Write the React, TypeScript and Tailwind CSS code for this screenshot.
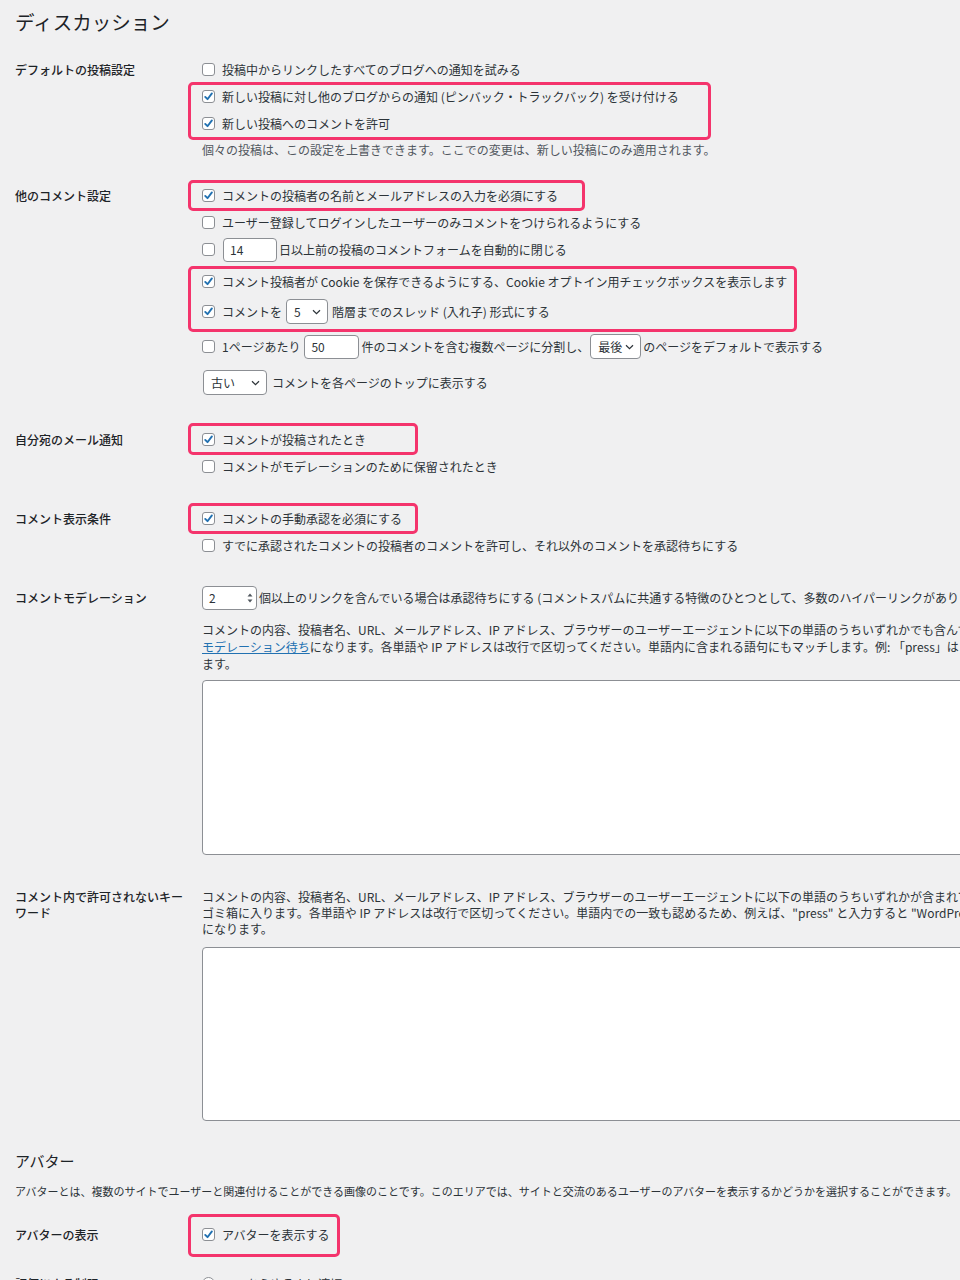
import type { ReactNode } from "react";
import clsx from "clsx";

const Check = ({ checked = false }: { checked?: boolean }) => (
  <span className="flex h-[13px] w-[13px] shrink-0 items-center justify-center rounded-[3px] border border-[#8c8f94] bg-white">
    {checked && (
      <svg width="11" height="11" viewBox="0 0 11 11">
        <path
          d="M2.2 5.9 L4.5 8.2 L8.9 2.4"
          fill="none"
          stroke="#2271b1"
          strokeWidth="1.9"
          strokeLinecap="round"
          strokeLinejoin="round"
        />
      </svg>
    )}
  </span>
);

const Chevron = () => (
  <svg width="9" height="6" viewBox="0 0 9 6" className="shrink-0">
    <path d="M1 1.2 L4.5 4.6 L8 1.2" fill="none" stroke="#2c3338" strokeWidth="1.2" />
  </svg>
);

const Select = ({ value, className }: { value: string; className?: string }) => (
  <span
    className={clsx(
      "flex h-[25px] shrink-0 items-center justify-between rounded-[4px] border border-[#8c8f94] bg-white pl-[7px] pr-[6px]",
      className
    )}
  >
    <span>{value}</span>
    <Chevron />
  </span>
);

const Field = ({ value, className }: { value: string; className?: string }) => (
  <span
    className={clsx(
      "flex h-[24px] shrink-0 items-center rounded-[4px] border border-[#8c8f94] bg-white pl-[6px]",
      className
    )}
  >
    {value}
  </span>
);

const Row = ({ children, className }: { children: ReactNode; className?: string }) => (
  <div className={clsx("flex h-[27px] items-center whitespace-nowrap", className)}>{children}</div>
);

// pink annotation frame drawn over the options it marks
const Mark = ({ frame, children }: { frame: string; children: ReactNode }) => (
  <div className="relative">
    {children}
    <span
      className={clsx(
        "pointer-events-none absolute -left-[14px] rounded-[5px] border-[3px] border-[#f4346c]",
        frame
      )}
    />
  </div>
);

const Section = ({
  label,
  className,
  children,
}: {
  label: ReactNode;
  className?: string;
  children: ReactNode;
}) => (
  <div className={clsx("flex", className)}>
    <div className="w-[187px] shrink-0 font-medium text-[#1d2327]">{label}</div>
    <div className="min-w-0 flex-1">{children}</div>
  </div>
);

const Label = ({ children }: { children: ReactNode }) => (
  <div className="flex h-[27px] items-center">{children}</div>
);

export default function App() {
  return (
    <div className="h-[1280px] w-full overflow-hidden bg-[#f0f0f1] pl-[15px] pt-[9px] font-['Noto_Sans_CJK_JP',sans-serif] text-[12px] text-[#2c3338]">
      <h1 className="text-[19.5px] leading-[26px] text-[#1d2327]">ディスカッション</h1>

      <Section label={<Label>デフォルトの投稿設定</Label>} className="mt-[21px]">
        <Row>
          <Check />
          <span className="ml-[7px]">投稿中からリンクしたすべてのブログへの通知を試みる</span>
        </Row>
        <Mark frame="-top-[1px] h-[58px] w-[523px]">
          <Row>
            <Check checked />
            <span className="ml-[7px]">新しい投稿に対し他のブログからの通知 (ピンバック・トラックバック) を受け付ける</span>
          </Row>
          <Row>
            <Check checked />
            <span className="ml-[7px]">新しい投稿へのコメントを許可</span>
          </Row>
        </Mark>
        <p className="mt-[4px] whitespace-nowrap leading-[17px] text-[#50575e]">
          個々の投稿は、この設定を上書きできます。ここでの変更は、新しい投稿にのみ適用されます。
        </p>
      </Section>

      <Section label={<Label>他のコメント設定</Label>} className="mt-[24px]">
        <Mark frame="-top-[2px] h-[31px] w-[397px]">
          <Row>
            <Check checked />
            <span className="ml-[7px]">コメントの投稿者の名前とメールアドレスの入力を必須にする</span>
          </Row>
        </Mark>
        <Row>
          <Check />
          <span className="ml-[7px]">ユーザー登録してログインしたユーザーのみコメントをつけられるようにする</span>
        </Row>
        <Row>
          <Check />
          <Field value="14" className="ml-[8px] w-[54px]" />
          <span className="ml-[2px]">日以上前の投稿のコメントフォームを自動的に閉じる</span>
        </Row>
        <Mark frame="-top-[2px] h-[66px] w-[609px]">
          <Row className="mt-[5px]">
            <Check checked />
            <span className="ml-[7px]">コメント投稿者が Cookie を保存できるようにする、Cookie オプトイン用チェックボックスを表示します</span>
          </Row>
          <Row className="mt-[3px]">
            <Check checked />
            <span className="ml-[7px]">コメントを</span>
            <Select value="5" className="ml-[4px] w-[42px]" />
            <span className="ml-[4px]">階層までのスレッド (入れ子) 形式にする</span>
          </Row>
        </Mark>
        <Row className="mt-[8px]">
          <Check />
          <span className="ml-[7px]">1ページあたり</span>
          <Field value="50" className="ml-[4px] w-[55px]" />
          <span className="ml-[2px]">件のコメントを含む複数ページに分割し、</span>
          <Select value="最後" className="ml-[1px] w-[51px] pl-[6px]" />
          <span className="ml-[2px]">のページをデフォルトで表示する</span>
        </Row>
        <Row className="mt-[9px]">
          <Select value="古い" className="ml-[1px] w-[64px]" />
          <span className="ml-[5px]">コメントを各ページのトップに表示する</span>
        </Row>
      </Section>

      <Section label={<Label>自分宛のメール通知</Label>} className="mt-[30px]">
        <Mark frame="-top-[3px] h-[32px] w-[230px]">
          <Row>
            <Check checked />
            <span className="ml-[7px]">コメントが投稿されたとき</span>
          </Row>
        </Mark>
        <Row>
          <Check />
          <span className="ml-[7px]">コメントがモデレーションのために保留されたとき</span>
        </Row>
      </Section>

      <Section label={<Label>コメント表示条件</Label>} className="mt-[25px]">
        <Mark frame="-top-[2px] h-[31px] w-[230px]">
          <Row>
            <Check checked />
            <span className="ml-[7px]">コメントの手動承認を必須にする</span>
          </Row>
        </Mark>
        <Row>
          <Check />
          <span className="ml-[7px]">すでに承認されたコメントの投稿者のコメントを許可し、それ以外のコメントを承認待ちにする</span>
        </Row>
      </Section>

      <Section label={<Label>コメントモデレーション</Label>} className="mt-[25px]">
        <Row>
          <span className="flex h-[24px] w-[55px] shrink-0 items-center justify-between rounded-[4px] border border-[#8c8f94] bg-white pl-[6px] pr-[3px]">
            2
            <svg width="6" height="12" viewBox="0 0 6 12">
              <path d="M3 1.5 L5.5 4.5 L0.5 4.5 Z" fill="#50575e" />
              <path d="M3 10.5 L5.5 7.5 L0.5 7.5 Z" fill="#50575e" />
            </svg>
          </span>
          <span className="ml-[2px]">
            個以上のリンクを含んでいる場合は承認待ちにする (コメントスパムに共通する特徴のひとつとして、多数のハイパーリンクがあります。)
          </span>
        </Row>
        <p className="mt-[10px] whitespace-nowrap leading-[17px]">
          コメントの内容、投稿者名、URL、メールアドレス、IP アドレス、ブラウザーのユーザーエージェントに以下の単語のうちいずれかでも含んでいる場合、そのコメントは
          <br />
          <a className="text-[#2271b1] underline">モデレーション待ち</a>
          になります。各単語や IP アドレスは改行で区切ってください。単語内に含まれる語句にもマッチします。例: 「press」は「WordPress」にマッチし
          <br />
          ます。
        </p>
        <div className="mt-[8px] h-[175px] w-[900px] rounded-[4px] border border-[#8c8f94] bg-white" />
      </Section>

      <Section
        label={<div className="pr-[12px] leading-[16px]">コメント内で許可されないキーワード</div>}
        className="mt-[34px]"
      >
        <p className="whitespace-nowrap leading-[16px]">
          コメントの内容、投稿者名、URL、メールアドレス、IP アドレス、ブラウザーのユーザーエージェントに以下の単語のうちいずれかが含まれている場合、そのコメントは
          <br />
          ゴミ箱に入ります。各単語や IP アドレスは改行で区切ってください。単語内での一致も認めるため、例えば、"press" と入力すると "WordPress" にもマッチすること
          <br />
          になります。
        </p>
        <div className="mt-[10px] h-[174px] w-[900px] rounded-[4px] border border-[#8c8f94] bg-white" />
      </Section>

      <h2 className="mt-[30px] text-[15px] leading-[20px] text-[#1d2327]">アバター</h2>
      <p className="mt-[12px] whitespace-nowrap text-[11px] leading-[16px]">
        アバターとは、複数のサイトでユーザーと関連付けることができる画像のことです。このエリアでは、サイトと交流のあるユーザーのアバターを表示するかどうかを選択することができます。
      </p>

      <Section label={<Label>アバターの表示</Label>} className="mt-[22px]">
        <Mark frame="-top-[7px] h-[43px] w-[152px]">
          <Row>
            <Check checked />
            <span className="ml-[7px]">アバターを表示する</span>
          </Row>
        </Mark>
      </Section>

      <Section label={<Label>評価による制限</Label>} className="mt-[22px]">
        <Row>
          <span className="h-[13px] w-[13px] shrink-0 rounded-full border border-[#8c8f94] bg-white" />
          <span className="ml-[7px]">G — あらゆる人に適切</span>
        </Row>
      </Section>
    </div>
  );
}
